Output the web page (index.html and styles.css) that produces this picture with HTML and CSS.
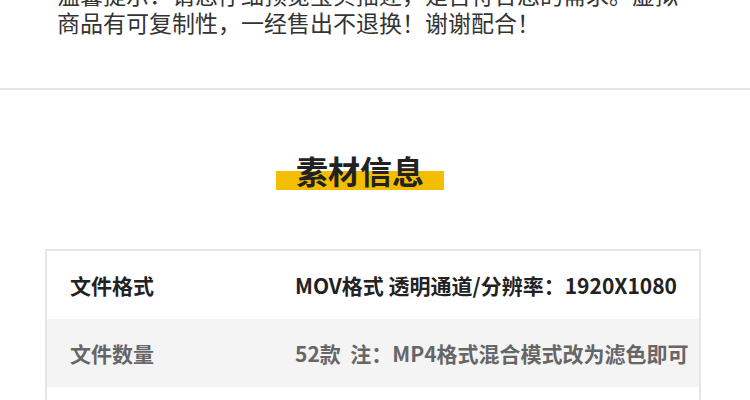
FILE: index.html
```html
<!DOCTYPE html>
<html lang="zh-CN">
<head>
<meta charset="utf-8">
<title>素材信息</title>
<link rel="stylesheet" href="styles.css">
</head>
<body>
<section class="notice">
  <p class="notice-text">温馨提示：请您仔细预览宝贝描述，是否符合您的需求。虚拟商品有可复制性，一经售出不退换！谢谢配合！</p>
</section>
<section class="info">
  <div class="heading">
    <h2 class="title">素材信息</h2>
  </div>
  <div class="table">
    <div class="row">
      <div class="label">文件格式</div>
      <div class="value">MOV格式 透明通道/分辨率：1920X1080</div>
    </div>
    <div class="row alt">
      <div class="label">文件数量</div>
      <div class="value">52款&nbsp; 注：MP4格式混合模式改为滤色即可</div>
    </div>
    <div class="row"></div>
  </div>
</section>
</body>
</html>
```
FILE: styles.css
```css
html, body {
  margin: 0;
  padding: 0;
  background: #ffffff;
  font-family: "Noto Sans CJK SC", "Noto Sans", sans-serif;
  overflow: hidden;
}

.notice {
  padding: 0 0 52px 57px;
  border-bottom: 2px solid #e6e6e6;
}

.notice-text {
  margin: -20px 0 0 0;
  width: 632px;
  font-size: 23px;
  line-height: 28px;
  color: #333333;
}

.info {
  padding-top: 64px;
}

.heading {
  display: flex;
  justify-content: center;
  padding-right: 30px;
}

.title {
  position: relative;
  z-index: 0;
  margin: 0;
  padding: 0 20px 4px;
  font-size: 32px;
  line-height: 32px;
  font-weight: 700;
  color: #222222;
}

.title::before {
  content: "";
  position: absolute;
  left: 0;
  right: 0;
  bottom: 0;
  height: 19px;
  background: #f5bd00;
  z-index: -1;
}

.table {
  margin: 59px 0 0 45px;
  width: 652px;
  border: 2px solid #e6e6e6;
}

.row {
  display: grid;
  grid-template-columns: 248px 1fr;
  align-items: center;
  height: 68px;
  font-size: 21px;
  font-weight: 700;
  color: #222222;
}

.row.alt {
  background: #f4f4f4;
  color: #666666;
}

.label {
  padding-left: 23px;
}

.value {
  white-space: nowrap;
}
```
